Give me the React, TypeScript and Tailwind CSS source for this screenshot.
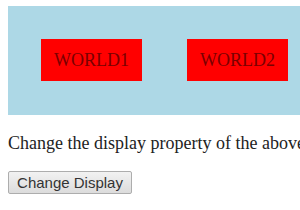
export default function App() {
  return (
    <div className="w-[300px] h-[210px] overflow-hidden bg-white pt-[6px] pl-[8px]">
      {/* blue strip with the two boxes */}
      <div className="w-[320px] h-[109px] bg-[#add8e6] flex items-start gap-[45px] pl-[33px] pt-[33px]">
        <div className="w-[101px] h-[42px] bg-[#ff0000] flex items-center justify-center text-[18px] text-[#7a0000] font-['Liberation_Serif',serif]">
          WORLD1
        </div>
        <div className="w-[101px] h-[42px] bg-[#ff0000] flex items-center justify-center text-[18px] text-[#7a0000] font-['Liberation_Serif',serif]">
          WORLD2
        </div>
      </div>

      <p className="mt-[18px] whitespace-nowrap text-[18px] leading-[21px] text-[#222] font-['Liberation_Serif',serif]">
        Change the display property of the above elements
      </p>

      <button className="mt-[17px] w-[124px] h-[23px] border border-[#adadad] rounded-[2px] bg-gradient-to-b from-[#f2f2f2] to-[#dcdcdc] text-[15px] leading-none text-[#333] font-['Liberation_Sans',sans-serif]">
        Change Display
      </button>
    </div>
  )
}
